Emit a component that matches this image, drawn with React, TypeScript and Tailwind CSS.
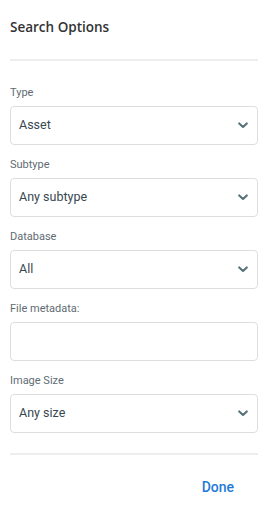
import React from 'react';

const Chevron = () => (
  <svg width="10" height="7" viewBox="0 0 10 7" className="shrink-0">
    <path d="M1.2 1.4 L5 5 L8.8 1.4" fill="none" stroke="#546e7a" strokeWidth="2" strokeLinecap="round" strokeLinejoin="round" />
  </svg>
);

function SelectField({ label, value }: { label: string; value: string }) {
  return (
    <div className="flex flex-col">
      <div className="text-[11px] leading-[16px] text-[#5f6b73] mb-[5px]">{label}</div>
      <div className="h-[39px] border border-[#dcdfe2] rounded-[4px] flex items-center justify-between pl-[8px] pr-[9px]">
        <span className="text-[12.5px] text-[#37474f]">{value}</span>
        <Chevron />
      </div>
    </div>
  );
}

export default function App() {
  return (
    <div className="w-[268px] h-[510px] bg-white px-[10px] pt-[17px]" style={{ fontFamily: 'Roboto, "Liberation Sans", sans-serif' }}>
      <h2 className="text-[13.5px] leading-[20px] font-semibold text-[#333333]" style={{ fontFamily: '"Open Sans", Lato, sans-serif' }}>
        Search Options
      </h2>
      <div className="h-[2px] bg-[#eeeeee] mt-[22px] mb-[24px]" />
      <div className="flex flex-col gap-[12px]">
        <SelectField label="Type" value="Asset" />
        <SelectField label="Subtype" value="Any subtype" />
        <SelectField label="Database" value="All" />
        <div className="flex flex-col">
          <div className="text-[11px] leading-[16px] text-[#5f6b73] mb-[5px]">File metadata:</div>
          <div className="h-[39px] border border-[#dcdfe2] rounded-[4px]" />
        </div>
        <SelectField label="Image Size" value="Any size" />
      </div>
      <div className="h-[2px] bg-[#eeeeee] mt-[20px]" />
      <div className="flex justify-end pr-[24px] pt-[22px]">
        <button className="text-[14px] font-medium text-[#1e7ad8]">Done</button>
      </div>
    </div>
  );
}
